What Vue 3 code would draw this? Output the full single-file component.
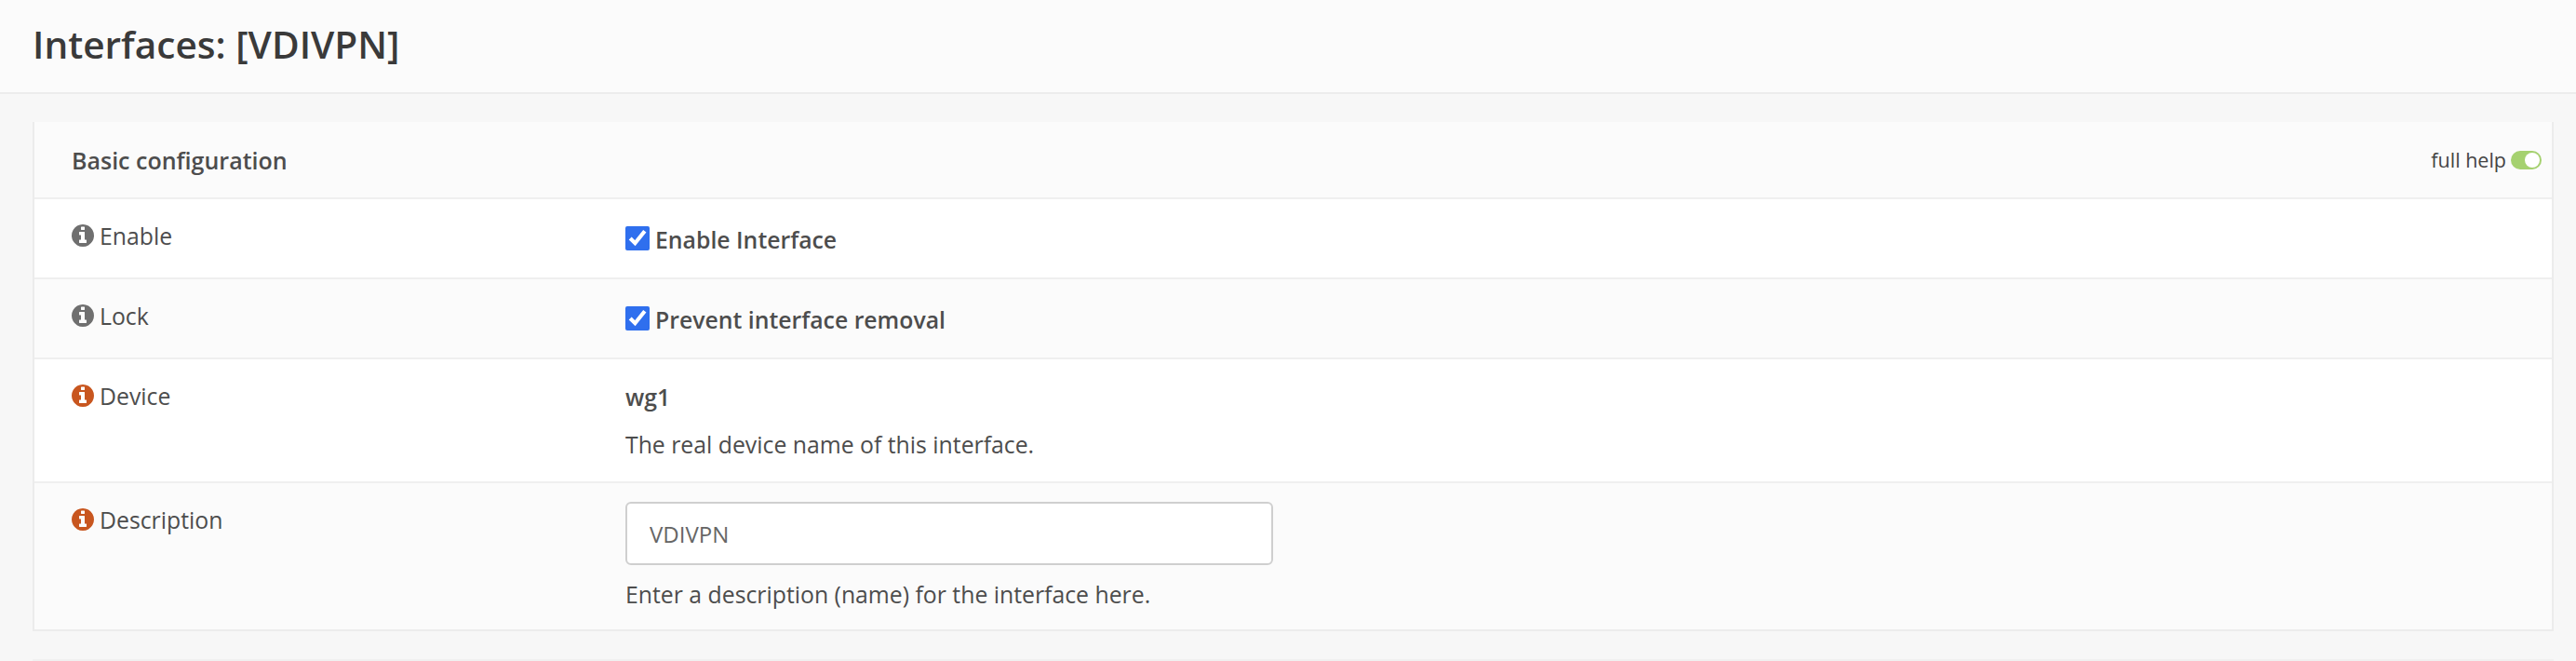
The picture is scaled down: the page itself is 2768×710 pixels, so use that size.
<script setup>
const infoPath = 'M1024 1376v-160q0-14-9-23t-23-9h-96v-512q0-14-9-23t-23-9h-320q-14 0-23 9t-9 23v160q0 14 9 23t23 9h96v320h-96q-14 0-23 9t-9 23v160q0 14 9 23t23 9h448q14 0 23-9t9-23zm-128-896v-160q0-14-9-23t-23-9h-192q-14 0-23 9t-9 23v160q0 14 9 23t23 9h192q14 0 23-9t9-23zm640 416q0 209-103 385.5t-279.5 279.5-385.5 103-385.5-103-279.5-279.5-103-385.5 103-385.5 279.5-279.5 385.5-103 385.5 103 279.5 279.5 103 385.5z'
</script>

<template>
  <div class="page">
    <header class="top">
      <h1 class="title">Interfaces: [VDIVPN]</h1>
    </header>
    <main class="main">
      <section class="card">
        <div class="card-head">
          <strong class="card-title">Basic configuration</strong>
          <div class="full-help">
            <span>full help</span>
            <span class="toggle"><span class="knob"></span></span>
          </div>
        </div>

        <div class="row row-check">
          <div class="label">
            <svg class="info" viewBox="0 128 1536 1536"><path :d="infoPath" /></svg>
            <span>Enable</span>
          </div>
          <div class="value">
            <label class="check"><input type="checkbox" checked /><span>Enable Interface</span></label>
          </div>
        </div>

        <div class="row row-check alt">
          <div class="label">
            <svg class="info" viewBox="0 128 1536 1536"><path :d="infoPath" /></svg>
            <span>Lock</span>
          </div>
          <div class="value">
            <label class="check"><input type="checkbox" checked /><span>Prevent interface removal</span></label>
          </div>
        </div>

        <div class="row row-device">
          <div class="label">
            <svg class="info warn" viewBox="0 128 1536 1536"><path :d="infoPath" /></svg>
            <span>Device</span>
          </div>
          <div class="value">
            <strong class="device">wg1</strong>
            <p class="help">The real device name of this interface.</p>
          </div>
        </div>

        <div class="row row-desc alt">
          <div class="label">
            <svg class="info warn" viewBox="0 128 1536 1536"><path :d="infoPath" /></svg>
            <span>Description</span>
          </div>
          <div class="value">
            <input class="text-input" type="text" value="VDIVPN" />
            <p class="help help-input">Enter a description (name) for the interface here.</p>
          </div>
        </div>
      </section>
      <div class="next-card"></div>
    </main>
  </div>
</template>

<style>
html, body { margin: 0; background: #f7f7f7; overflow: hidden; }
</style>

<style scoped>
.page {
  height: 710px;
  overflow: hidden;
  background: #f7f7f7;
  font-family: "Open Sans", "Noto Sans", sans-serif;
  font-size: 24.8px;
  color: #4d4d4d;
}
.top {
  box-sizing: border-box;
  height: 101px;
  background: #fbfbfb;
  border-bottom: 2px solid #ececec;
  padding: 0 0 2px 35px;
  display: flex;
  align-items: center;
}
.title {
  margin: 0;
  font-size: 40.6px;
  font-weight: 600;
  color: #3a3a3a;
  line-height: 1;
}
.main { padding: 30px 24px 0 35px; }
.card {
  border: 2px solid #ececec;
  border-top: 0;
  background: #fff;
}
.card-head {
  box-sizing: border-box;
  height: 83px;
  background: #fbfbfb;
  border-bottom: 2px solid #efefef;
  display: flex;
  align-items: center;
  justify-content: space-between;
  padding: 0 11px 0 40px;
}
.card-title { font-size: 25px; font-weight: 600; color: #4d4d4d; }
.full-help {
  display: flex;
  align-items: center;
  gap: 5px;
  font-size: 21.5px;
  color: #444;
}
.toggle {
  box-sizing: border-box;
  width: 33px;
  height: 20px;
  border-radius: 10px;
  background: #a5d16f;
  padding: 2px;
  display: flex;
  justify-content: flex-end;
}
.knob { width: 16px; height: 16px; border-radius: 50%; background: #fff; }
.row {
  box-sizing: border-box;
  display: grid;
  grid-template-columns: 635px 1fr;
  border-bottom: 2px solid #efefef;
  background: #fff;
}
.row:last-child { border-bottom: 0; }
.alt { background: #fbfbfb; }
.row-check { height: 86px; }
.row-device { height: 133px; }
.row-desc { height: 157px; }
.label {
  display: flex;
  align-items: center;
  gap: 6px;
  height: 24px;
  padding-left: 40px;
  margin-top: 27px;
}
.info { width: 24px; height: 24px; fill: #6f6f6f; flex: none; }
.warn { fill: #c8561f; }
.check {
  display: flex;
  align-items: center;
  gap: 6px;
  margin-top: 26px;
  font-weight: 600;
}
.check input {
  width: 26px;
  height: 26px;
  margin: -3px 0 0;
  accent-color: #2f6fee;
  flex: none;
}
.device { display: block; margin-top: 25px; font-weight: 600; line-height: 30px; }
.help { margin: 21px 0 0; line-height: 30px; }
.row-desc .value { padding-top: 20px; }
.text-input {
  box-sizing: border-box;
  display: block;
  width: 696px;
  height: 68px;
  border: 2px solid #cfcfcf;
  border-radius: 6px;
  background: #fff;
  padding: 0 24px;
  font: inherit;
  font-size: 24px;
  font-weight: 400;
  color: #666;
  outline: none;
}
.help-input { margin-top: 16px; }
.next-card {
  margin-top: 30px;
  height: 2px;
  background: #f0f0f0;
}
</style>
